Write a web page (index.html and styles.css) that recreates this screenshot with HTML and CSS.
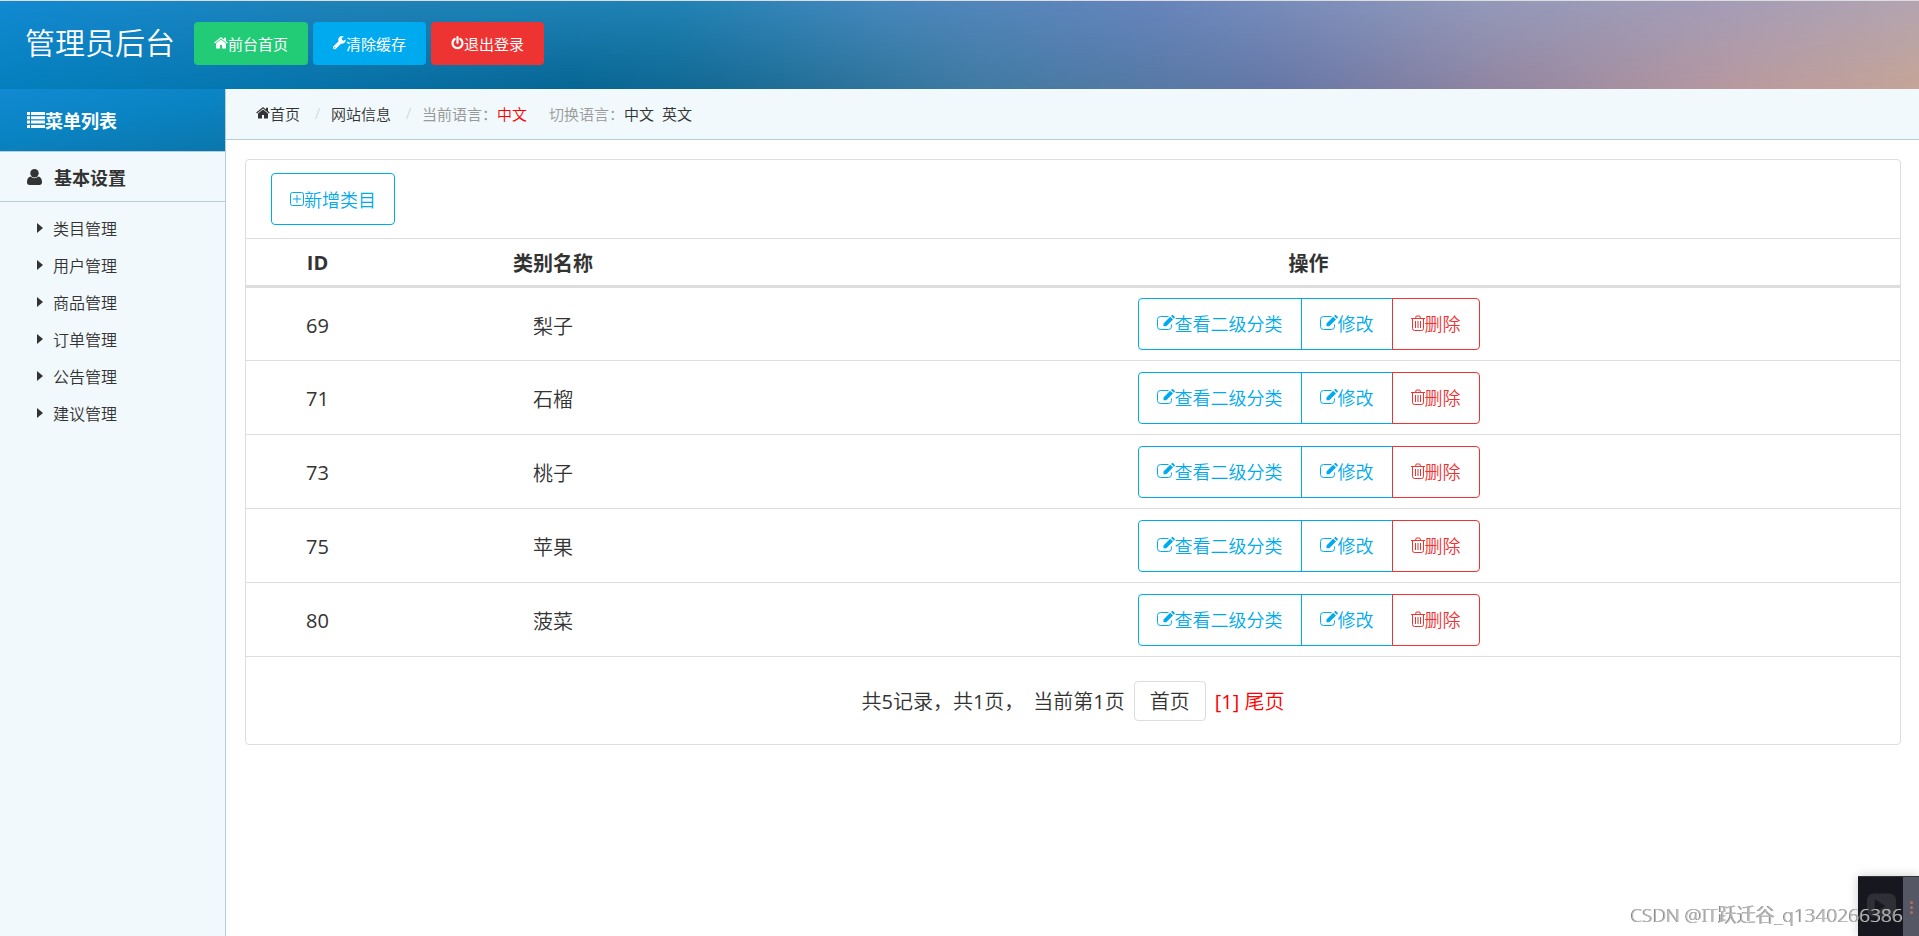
FILE: index.html
```html
<!DOCTYPE html>
<html lang="zh-CN">
<head>
    <meta charset="UTF-8">
    <meta name="viewport" content="width=device-width, initial-scale=1.0">
    <title>管理员后台</title>
    <link rel="stylesheet" href="styles.css">
</head>
<body>
    <!-- 图标 -->
    <svg class="sprite" aria-hidden="true">
        <symbol id="i-home" viewBox="0 0 14 14"><path d="M7 3.4 2 7.6V12a.5.5 0 0 0 .5.5H6V9h2v3.500h3.500a.5.5 0 0 0 .5-.5V7.600z"/><path d="M7 .9.200 6.600l.8 1L7 2.600l6 5 .8-1L12 5V1.800h-2v1.600z"/></symbol>
        <symbol id="i-wrench" viewBox="0 0 14 14"><path d="M13.500 3.200 11.300 4.500 9.500 3.500v-2L11.700.2A4 4 0 0 0 6 5.200L.6 10.600a1.600 1.600 0 0 0 2.600 2.600l5.400-5.400a4 4 0 0 0 4.900-4.600zM2 12.600a.6.6 0 1 1 0-1.200.6.6 0 0 1 0 1.200z"/></symbol>
        <symbol id="i-power" viewBox="0 0 13 14"><path d="M3.700 3a5 5 0 1 0 5.600 0M6.500 1.200v5.600" fill="none" stroke="currentColor" stroke-width="2.200" stroke-linecap="round"/></symbol>
        <symbol id="i-list" viewBox="0 0 18 16"><path d="M0 0h3v3H0zM4 0h14v3H4zM0 4.300h3v3H0zM4 4.300h14v3H4zM0 8.600h3v3H0zM4 8.600h14v3H4zM0 13h3v3H0zM4 13h14v3H4z"/></symbol>
        <symbol id="i-user" viewBox="0 0 15 16"><circle cx="7.500" cy="4.300" r="4.200"/><path d="M3.600 7.600C1 8 0 10.500 0 13.200 0 15 1 16 2.700 16h9.600c1.700 0 2.700-1 2.700-2.800 0-2.700-1-5.200-3.600-5.600a5.500 5.500 0 0 1-7.800 0z"/></symbol>
        <symbol id="i-caret" viewBox="0 0 6 10"><path d="M0 0v10l6-5z"/></symbol>
        <symbol id="i-plus" viewBox="0 0 14 14"><path d="M2.500.5h9a2 2 0 0 1 2 2v9a2 2 0 0 1-2 2h-9a2 2 0 0 1-2-2v-9a2 2 0 0 1 2-2zM7 3v8M3 7h8" fill="none" stroke="currentColor"/></symbol>
        <symbol id="i-edit" viewBox="0 0 18 16"><path d="M11.500 1.500h-8a3 3 0 0 0-3 3v7a3 3 0 0 0 3 3h8a3 3 0 0 0 3-3V9.500" fill="none" stroke="currentColor"/><path d="M6.500 8.500 13.200 1.800l2.800 2.800-6.700 6.700H6.500zM14 1l.9-.8c.4-.3.8-.3 1.200 0l1.500 1.500c.4.4.4.8 0 1.200l-.8.900z"/></symbol>
        <symbol id="i-trash" viewBox="0 0 14 16"><path d="M0 3.500h14M4.500 3.500l.7-2.500h3.600l.7 2.500M1.500 3.500v10a2 2 0 0 0 2 2h7a2 2 0 0 0 2-2v-10M4.500 6v7M7 6v7M9.500 6v7" fill="none" stroke="currentColor"/></symbol>
    </svg>

    <header class="header">
        <h1 class="logo">管理员后台</h1>
        <nav class="head-links">
            <a class="button bg-green" href="#"><svg class="icon"><use href="#i-home"/></svg>前台首页</a>
            <a class="button bg-blue" href="#"><svg class="icon-small"><use href="#i-wrench"/></svg>清除缓存</a>
            <a class="button bg-red" href="#"><svg class="icon-small"><use href="#i-power"/></svg>退出登录</a>
        </nav>
    </header>

    <div class="wrap">
        <aside class="leftnav">
            <div class="leftnav-title"><svg class="icon-list"><use href="#i-list"/></svg>菜单列表</div>
            <h2><svg class="icon-user"><use href="#i-user"/></svg>基本设置</h2>
            <ul>
                <li><a href="#"><svg class="icon-caret"><use href="#i-caret"/></svg>类目管理</a></li>
                <li><a href="#"><svg class="icon-caret"><use href="#i-caret"/></svg>用户管理</a></li>
                <li><a href="#"><svg class="icon-caret"><use href="#i-caret"/></svg>商品管理</a></li>
                <li><a href="#"><svg class="icon-caret"><use href="#i-caret"/></svg>订单管理</a></li>
                <li><a href="#"><svg class="icon-caret"><use href="#i-caret"/></svg>公告管理</a></li>
                <li><a href="#"><svg class="icon-caret"><use href="#i-caret"/></svg>建议管理</a></li>
            </ul>
        </aside>

        <div class="main">
            <ul class="bread">
                <li><a href="#"><svg class="icon"><use href="#i-home"/></svg>首页</a></li>
                <li><a href="#">网站信息</a></li>
                <li class="lang">
                    <b>当前语言：</b><span class="red">中文</span>
                    <span class="switch">切换语言：</span><a href="#">中文</a><a class="en" href="#">英文</a>
                </li>
            </ul>

            <div class="panel">
                <div class="panel-bar">
                    <button type="button" class="btn-line"><svg class="icon"><use href="#i-plus"/></svg>新增类目</button>
                </div>
                <table class="table">
                    <thead>
                        <tr>
                            <th class="col-id">ID</th>
                            <th class="col-name">类别名称</th>
                            <th>操作</th>
                        </tr>
                    </thead>
                    <tbody>
                        <tr>
                            <td>69</td>
                            <td>梨子</td>
                            <td class="ops"><div class="button-group"><button type="button" class="btn-line"><svg class="icon-edit"><use href="#i-edit"/></svg>查看二级分类</button><button type="button" class="btn-line"><svg class="icon-edit"><use href="#i-edit"/></svg>修改</button><button type="button" class="btn-line btn-del"><svg class="icon-trash"><use href="#i-trash"/></svg>删除</button></div></td>
                        </tr>
                        <tr>
                            <td>71</td>
                            <td>石榴</td>
                            <td class="ops"><div class="button-group"><button type="button" class="btn-line"><svg class="icon-edit"><use href="#i-edit"/></svg>查看二级分类</button><button type="button" class="btn-line"><svg class="icon-edit"><use href="#i-edit"/></svg>修改</button><button type="button" class="btn-line btn-del"><svg class="icon-trash"><use href="#i-trash"/></svg>删除</button></div></td>
                        </tr>
                        <tr>
                            <td>73</td>
                            <td>桃子</td>
                            <td class="ops"><div class="button-group"><button type="button" class="btn-line"><svg class="icon-edit"><use href="#i-edit"/></svg>查看二级分类</button><button type="button" class="btn-line"><svg class="icon-edit"><use href="#i-edit"/></svg>修改</button><button type="button" class="btn-line btn-del"><svg class="icon-trash"><use href="#i-trash"/></svg>删除</button></div></td>
                        </tr>
                        <tr>
                            <td>75</td>
                            <td>苹果</td>
                            <td class="ops"><div class="button-group"><button type="button" class="btn-line"><svg class="icon-edit"><use href="#i-edit"/></svg>查看二级分类</button><button type="button" class="btn-line"><svg class="icon-edit"><use href="#i-edit"/></svg>修改</button><button type="button" class="btn-line btn-del"><svg class="icon-trash"><use href="#i-trash"/></svg>删除</button></div></td>
                        </tr>
                        <tr>
                            <td>80</td>
                            <td>菠菜</td>
                            <td class="ops"><div class="button-group"><button type="button" class="btn-line"><svg class="icon-edit"><use href="#i-edit"/></svg>查看二级分类</button><button type="button" class="btn-line"><svg class="icon-edit"><use href="#i-edit"/></svg>修改</button><button type="button" class="btn-line btn-del"><svg class="icon-trash"><use href="#i-trash"/></svg>删除</button></div></td>
                        </tr>
                    </tbody>
                </table>
                <!-- 分页 -->
                <div class="pagelist">
                    <span>共<b>5</b>记录，共<b>1</b>页，</span>
                    <span>当前第<b>1</b>页</span>
                    <a class="page-first" href="#">首页</a>
                    <span class="red"><b>[1]</b> <a href="#">尾页</a></span>
                </div>
            </div>
        </div>
    </div>

    <!-- 右下角悬浮播放器 -->
    <div class="float-player">
        <svg class="play" viewBox="0 0 30 26"><rect width="30" height="24" rx="7" fill="#2f3035"/><path d="M8 6v14l11-7z" fill="#17181f"/></svg>
        <div class="float-handle"><i></i><i></i><i></i></div>
    </div>
    <div class="watermark">CSDN @IT跃迁谷_q1340266386</div>
</body>
</html>
```
FILE: styles.css
```css
* {
    box-sizing: border-box;
}

body {
    margin: 0;
    min-height: 100vh;
    display: flex;
    flex-direction: column;
    font-family: "Open Sans", "Noto Sans CJK SC", sans-serif;
    font-weight: 350;
    font-size: 15px;
    color: #333;
    background-color: #fff;
}

h1, h2, ul {
    margin: 0;
    padding: 0;
    list-style: none;
}

a {
    color: inherit;
    text-decoration: none;
}

svg {
    fill: currentColor;
    flex: none;
}

.sprite {
    display: none;
}

.icon {
    width: 14px;
    height: 14px;
}

.icon-small {
    width: 13px;
    height: 14px;
}

.red {
    color: #f00;
}

/* 头部 */
.header {
    position: relative;
    display: flex;
    align-items: center;
    gap: 19px;
    height: 89px;
    padding: 0 25px 4px;
    border-top: 1px solid #ddd;
    color: #fff;
    background: linear-gradient(to right, #0580be 0%, #0673aa 17%, #076694 30%, #146a94 37%, #407ba3 51%, #6878a8 67%, #9286a2 78%, #b899a0 90%, #c6a597 100%);
}

.header::before {
    content: "";
    position: absolute;
    inset: 0;
    background: linear-gradient(to right, #1289d2 0%, #1f82b8 17%, #2082b4 35%, #4687bb 46%, #6684bb 60%, #9298b9 77%, #a49cb6 90%, #b3a4b0 100%);
    mask-image: linear-gradient(to bottom, #000, transparent);
}

.header > * {
    position: relative;
}

.logo {
    font-size: 30px;
    font-weight: 350;
    line-height: 40px;
}

.head-links {
    display: flex;
    gap: 5px;
}

.button {
    display: flex;
    align-items: center;
    height: 43px;
    padding: 0 20px;
    border-radius: 4px;
    font-weight: 400;
}

.bg-green {
    background-color: #2c7;
}

.bg-blue {
    background-color: #0ae;
}

.bg-red {
    background-color: #e33;
}

/* 左侧菜单 */
.wrap {
    flex: 1;
    display: flex;
}

.leftnav {
    width: 226px;
    border-right: 1px solid #b5cfd9;
    background-color: #f1f9fc;
}

.leftnav-title {
    display: flex;
    align-items: center;
    height: 62px;
    padding-left: 27px;
    font-size: 18px;
    font-weight: 700;
    color: #fff;
    background: linear-gradient(170deg, #1289d2, #0a83c2 50%, #0b76ac);
}

.icon-list {
    width: 18px;
    height: 16px;
}

.leftnav h2 {
    display: flex;
    align-items: center;
    gap: 12px;
    height: 51px;
    padding-left: 27px;
    border-top: 1px solid #b5cfd9;
    border-bottom: 1px solid #b5cfd9;
    font-size: 18px;
}

.icon-user {
    width: 15px;
    height: 16px;
}

.leftnav ul {
    padding: 7px 0 0 37px;
}

.leftnav li a {
    display: flex;
    align-items: center;
    gap: 10px;
    height: 37px;
    font-size: 16px;
}

.icon-caret {
    width: 6px;
    height: 10px;
}

/* 面包屑 */
.main {
    flex: 1;
    min-width: 0;
}

.bread {
    display: flex;
    align-items: center;
    height: 51px;
    padding: 0 0 2px 30px;
    border-bottom: 1px solid #b5cfd9;
    background-color: #f1f9fc;
}

.bread li {
    display: flex;
    align-items: center;
}

.bread li a {
    display: flex;
    align-items: center;
}

.bread li + li::before {
    content: "/";
    width: 27px;
    padding-left: 4px;
    text-align: center;
    color: #ccc;
}

.lang {
    color: #999;
}

.lang a {
    color: #333;
}

.lang b,
.pagelist b {
    font-weight: 400;
}

.switch {
    margin-left: 22px;
}

.en {
    margin-left: 8px;
}

/* 列表 */
.panel {
    margin: 19px 18px 20px 19px;
    border: 1px solid #ddd;
    border-radius: 4px;
}

.panel-bar {
    padding: 13px 25px;
    border-bottom: 1px solid #ddd;
}

.btn-line {
    display: flex;
    align-items: center;
    height: 52px;
    padding: 0 18px;
    border: 1px solid #0ae;
    border-radius: 4px;
    background-color: transparent;
    font: inherit;
    font-size: 18px;
    color: #0ae;
    cursor: pointer;
}

.table {
    width: 100%;
    border-spacing: 0;
    table-layout: fixed;
    font-size: 20px;
    text-align: center;
}

.table th {
    height: 49px;
    padding: 0;
    border-bottom: 3px solid #ddd;
}

.table td {
    height: 74px;
    padding: 2px 0 0;
    border-bottom: 1px solid #ddd;
}

.table tbody tr:first-child td {
    height: 73px;
}

.table td:first-child {
    font-weight: 400;
}

.table .ops {
    padding: 0;
}

.col-id {
    width: 143px;
}

.col-name {
    width: 328px;
}

.button-group {
    display: inline-flex;
    vertical-align: middle;
}

.button-group .btn-line {
    padding-bottom: 2px;
    border-radius: 0;
}

.button-group .btn-line + .btn-line {
    margin-left: -1px;
}

.button-group .btn-line:first-child {
    border-radius: 4px 0 0 4px;
}

.button-group .btn-line:last-child {
    border-radius: 0 4px 4px 0;
}

.button-group .btn-del {
    border-color: #e33;
    color: #e33;
}

.icon-edit {
    width: 18px;
    height: 16px;
}

.icon-trash {
    width: 14px;
    height: 16px;
}

.pagelist {
    display: flex;
    align-items: center;
    justify-content: center;
    gap: 9px;
    height: 87px;
    font-size: 20px;
}

.page-first {
    height: 40px;
    padding: 0 15px;
    border: 1px solid #ddd;
    border-radius: 4px;
    line-height: 40px;
}

/* 悬浮 */
.float-player {
    position: fixed;
    right: 0;
    bottom: 0;
    display: flex;
    width: 61px;
    height: 60px;
    border-top: 1px solid #333;
    background-color: #17181f;
    box-shadow: 0 0 10px rgba(0, 0, 0, 0.2);
}

.play {
    width: 29px;
    height: 26px;
    margin: 16px 7px 0 9px;
}

.float-handle {
    flex: 1;
    display: flex;
    flex-direction: column;
    align-items: center;
    gap: 2px;
    padding-top: 24px;
    background-color: #565764;
}

.float-handle i {
    width: 3px;
    height: 3px;
    border-radius: 50%;
    background-color: #b0705a;
}

.watermark {
    position: fixed;
    right: 16px;
    bottom: 6px;
    font-family: "Noto Sans", "Noto Sans CJK SC", sans-serif;
    font-size: 19px;
    line-height: 30px;
    color: #bbb;
    text-shadow: -1px 0 0 #888;
}
```
